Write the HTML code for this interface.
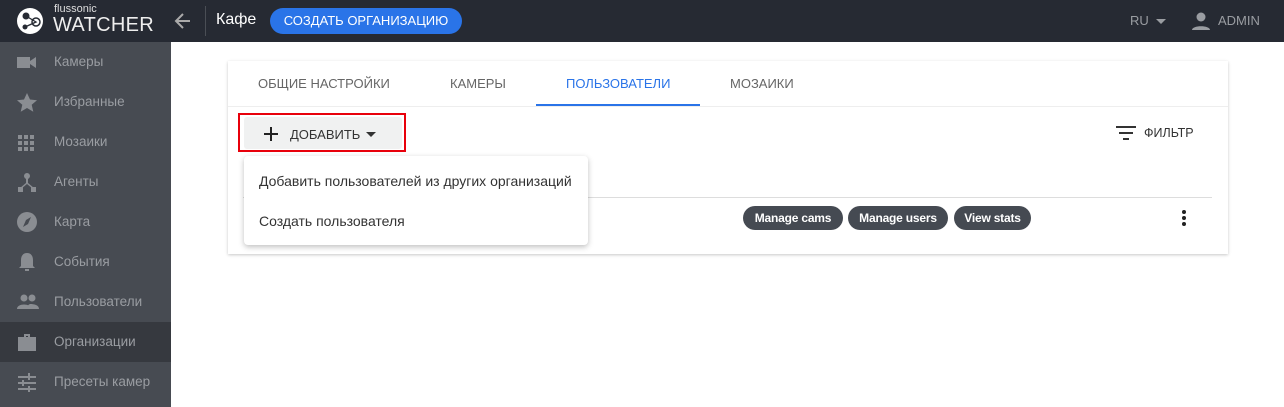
<!DOCTYPE html><html><head><meta charset="utf-8"><style>
*{box-sizing:border-box;margin:0;padding:0}
body{width:1284px;height:407px;overflow:hidden;background:#fff;font-family:"Liberation Sans",sans-serif;position:relative}
.hdr{position:absolute;left:0;top:0;width:1284px;height:42px;background:#262a33}
.side{position:absolute;left:0;top:42px;width:171px;height:365px;background:#474b52}
.it{position:absolute;left:0;width:171px;height:40px;color:#9a9da2;font-size:13.5px;line-height:40px;padding-left:54px}
.it svg{position:absolute;left:16px;top:10px}
.a{position:absolute}
.tab{position:absolute;top:61px;height:46px;line-height:46px;font-size:13px;color:#666}
.chip{position:absolute;top:206px;height:24px;border-radius:12px;background:#454a52;color:#fff;font-size:12px;font-weight:bold;line-height:24px;text-align:center;letter-spacing:-0.2px}
</style></head><body>
<div class="hdr">
<svg class="a" style="left:16px;top:7px" width="30" height="28" viewBox="0 0 30 28"><circle cx="14" cy="14" r="13" fill="#fff"/><circle cx="10" cy="9" r="3.5" fill="#262a33"/><circle cx="20" cy="15" r="4" fill="none" stroke="#262a33" stroke-width="1.5"/><circle cx="9" cy="20" r="2.5" fill="#262a33"/><path d="M10 9L20 15L9 20" stroke="#262a33" stroke-width="1.3" fill="none"/></svg>
<div class="a" style="left:54px;top:3px;color:#ddd;font-size:11px">flussonic</div>
<div class="a" style="left:53px;top:14px;color:#eee;font-size:20px;letter-spacing:0.3px">WATCHER</div>
<svg class="a" style="left:174px;top:12px" width="18" height="18" viewBox="0 0 18 18"><path d="M16 9H3M9 2L2 9l7 7" stroke="#aaa" stroke-width="2" fill="none"/></svg>
<div class="a" style="left:205px;top:6px;width:1px;height:30px;background:#4a4e55"></div>
<div class="a" style="left:216px;top:11px;color:#fff;font-size:16px">Кафе</div>
<div class="a" style="left:270px;top:8px;width:192px;height:26px;border-radius:13px;background:#2a74e8;color:#fff;font-size:13px;line-height:26px;text-align:center">СОЗДАТЬ ОРГАНИЗАЦИЮ</div>
<div class="a" style="left:1130px;top:13px;color:#9a9da2;font-size:13px">RU</div>
<div class="a" style="left:1156px;top:19px;border:5px solid transparent;border-top-color:#9a9da2"></div>
<svg class="a" style="left:1191px;top:11px" width="20" height="20" viewBox="0 0 20 20"><circle cx="10" cy="6" r="4.5" fill="#9a9da2"/><path d="M1 19c0-5 18-5 18 0z" fill="#9a9da2"/></svg>
<div class="a" style="left:1218px;top:13px;color:#9a9da2;font-size:13px">ADMIN</div>
</div>
<div class="side">
<div class="it" style="top:0"><svg width="22" height="20"><rect x="1" y="5" width="13" height="11" fill="#8a8d92"/><path d="M14 9l6-4v11l-6-4z" fill="#8a8d92"/></svg>Камеры</div>
<div class="it" style="top:40px"><svg width="22" height="20"><path d="M11 1l3 6.5 7 .7-5.3 4.6 1.6 7L11 16l-6.3 3.8 1.6-7L1 8.2l7-.7z" fill="#8a8d92"/></svg>Избранные</div>
<div class="it" style="top:80px"><svg width="22" height="20"><g fill="#8a8d92"><rect x="2" y="3" width="4" height="4"/><rect x="8" y="3" width="4" height="4"/><rect x="14" y="3" width="4" height="4"/><rect x="2" y="9" width="4" height="4"/><rect x="8" y="9" width="4" height="4"/><rect x="14" y="9" width="4" height="4"/><rect x="2" y="15" width="4" height="4"/><rect x="8" y="15" width="4" height="4"/><rect x="14" y="15" width="4" height="4"/></g></svg>Мозаики</div>
<div class="it" style="top:120px"><svg width="22" height="20"><g fill="#8a8d92"><circle cx="11" cy="4" r="3"/><rect x="2" y="15" width="5" height="5"/><rect x="15" y="15" width="5" height="5"/><path d="M10 6h2v5l6 5-1 1-6-5-6 5-1-1 6-5z"/></g></svg>Агенты</div>
<div class="it" style="top:160px"><svg width="22" height="20"><circle cx="11" cy="10" r="10" fill="#8a8d92"/><path d="M15 5l-3 7-5 3 3-7z" fill="#474b52"/></svg>Карта</div>
<div class="it" style="top:200px"><svg width="22" height="20"><path d="M11 1c-4 0-6 3-6 7v6l-2 2h16l-2-2V8c0-4-2-7-6-7z" fill="#8a8d92"/><rect x="9" y="17" width="4" height="2" fill="#8a8d92"/></svg>События</div>
<div class="it" style="top:240px"><svg width="24" height="20"><g fill="#8a8d92"><circle cx="8" cy="6" r="3.5"/><circle cx="16" cy="6" r="3.5"/><path d="M1 17c0-6 14-6 14 0zM11 17c0-3 1-4 3-5 4 0 9 1 9 5z"/></g></svg>Пользователи</div>
<div class="it" style="top:280px;background:#36393f"><svg width="22" height="20"><path d="M8 2h6v3h6v14H2V5h6zM10 4v1h2V4z" fill="#8a8d92"/></svg>Организации</div>
<div class="it" style="top:320px"><svg width="22" height="20"><g fill="#8a8d92"><rect x="2" y="4" width="18" height="2"/><rect x="2" y="10" width="18" height="2"/><rect x="2" y="16" width="18" height="2"/><rect x="12" y="1" width="2" height="7" /><rect x="6" y="8" width="2" height="6"/><rect x="12" y="14" width="2" height="6"/></g></svg>Пресеты камер</div>
</div>
<div class="a" style="left:228px;top:61px;width:1000px;height:193px;background:#fff;box-shadow:0 1px 3px rgba(0,0,0,.22)"></div>
<div class="a" style="left:228px;top:106px;width:1000px;height:1px;background:#eee"></div>
<div class="tab" style="left:258px">ОБЩИЕ НАСТРОЙКИ</div>
<div class="tab" style="left:450px">КАМЕРЫ</div>
<div class="tab" style="left:566px;color:#2a74e8">ПОЛЬЗОВАТЕЛИ</div>
<div class="a" style="left:536px;top:104px;width:164px;height:2px;background:#2a74e8"></div>
<div class="tab" style="left:730px">МОЗАИКИ</div>
<div class="a" style="left:238px;top:113px;width:168px;height:39px;border:2px solid #e8000b"></div>
<div class="a" style="left:244px;top:117px;width:158px;height:32px;background:#f0f1f1;border-radius:3px"></div>
<svg class="a" style="left:263px;top:126px" width="16" height="16"><path d="M8 1v14M1 8h14" stroke="#222" stroke-width="2"/></svg>
<div class="a" style="left:290px;top:127px;font-size:13px;color:#333">ДОБАВИТЬ</div>
<div class="a" style="left:366px;top:132px;border:5px solid transparent;border-top-color:#333"></div>
<svg class="a" style="left:1116px;top:126px" width="20" height="14"><g fill="#333"><rect x="0" y="0" width="20" height="2"/><rect x="3" y="6" width="14" height="2"/><rect x="7" y="12" width="6" height="2"/></g></svg>
<div class="a" style="left:1144px;top:126px;font-size:12.5px;color:#333">ФИЛЬТР</div>
<div class="a" style="left:243px;top:197px;width:969px;height:1px;background:#ddd"></div>
<div class="chip" style="left:743px;width:100px">Manage cams</div>
<div class="chip" style="left:848px;width:100px">Manage users</div>
<div class="chip" style="left:954px;width:77px">View stats</div>
<svg class="a" style="left:1181px;top:209px" width="6" height="18"><g fill="#222"><circle cx="3" cy="3" r="2"/><circle cx="3" cy="9" r="2"/><circle cx="3" cy="15" r="2"/></g></svg>
<div class="a" style="left:244px;top:156px;width:344px;height:89px;background:#fff;border-radius:4px;box-shadow:0 2px 6px rgba(0,0,0,.25)">
<div class="a" style="left:15px;top:17px;font-size:14px;color:#333">Добавить пользователей из других организаций</div>
<div class="a" style="left:15px;top:57px;font-size:14px;color:#333">Создать пользователя</div>
</div>
</body></html>
